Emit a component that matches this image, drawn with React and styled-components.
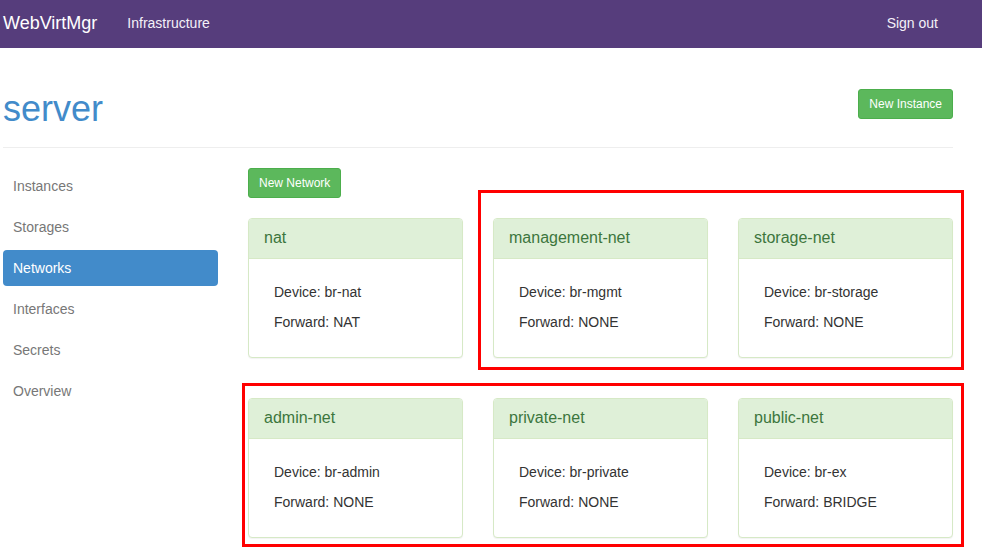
import React from "react";
import styled, { createGlobalStyle } from "styled-components";

const Global = createGlobalStyle`
  html, body { margin: 0; padding: 0; background: #fff; }
  body {
    font-family: "Liberation Sans", Arial, Helvetica, sans-serif;
    font-size: 14px;
    line-height: 20px;
    color: #333;
  }
  * { box-sizing: border-box; }
`;

const Page = styled.div`
  position: relative;
  width: 982px;
  min-height: 558px;
  overflow: hidden;
`;

const Navbar = styled.nav`
  height: 48px;
  background: #563d7c;
  display: flex;
  align-items: center;
  padding: 0 44px 2px 3px;
`;

const Brand = styled.a`
  font-size: 18px;
  color: #fff;
  text-decoration: none;
  margin-right: 30px;
`;

const NavLink = styled.a`
  font-size: 14px;
  color: #f4f1f8;
  text-decoration: none;
  margin-left: ${(p) => (p.$right ? "auto" : "0")};
`;

const Container = styled.div`
  width: 950px;
  margin-left: 3px;
`;

const Header = styled.div`
  height: 100px;
  display: flex;
  justify-content: space-between;
  align-items: flex-start;
  border-bottom: 1px solid #eee;
`;

const Title = styled.h1`
  margin: 41px 0 0;
  font-size: 36px;
  font-weight: 500;
  line-height: 40px;
  color: #428bca;
`;

const Button = styled.button`
  font-family: inherit;
  font-size: 12px;
  line-height: 18px;
  padding: 5px 10px;
  height: 30px;
  color: #fff;
  background: #5cb85c;
  border: 1px solid #4cae4c;
  border-radius: 3px;
  cursor: pointer;
  margin-top: ${(p) => p.$mt || "0"};
`;

const Body = styled.div`
  display: flex;
  margin-top: 20px;
`;

const Sidebar = styled.ul`
  list-style: none;
  margin: 0;
  padding: 0;
  width: 215px;
  display: flex;
  flex-direction: column;
  gap: 5px;
`;

const SideItem = styled.li`
  height: 36px;
  line-height: 36px;
  padding: 0 10px;
  border-radius: 4px;
  color: ${(p) => (p.$active ? "#fff" : "#777")};
  background: ${(p) => (p.$active ? "#428bca" : "transparent")};
`;

const Main = styled.div`
  margin-left: 30px;
  width: 705px;
`;

const Grid = styled.div`
  margin-top: 20px;
  display: grid;
  grid-template-columns: repeat(3, 215px);
  column-gap: 30px;
  row-gap: 40px;
`;

const Card = styled.div`
  border: 1px solid #d6e9c6;
  border-radius: 4px;
  background: #fff;
  box-shadow: 0 1px 1px rgba(0, 0, 0, 0.05);
  overflow: hidden;
`;

const CardHead = styled.div`
  height: 40px;
  line-height: 37px;
  padding: 0 15px;
  background: #dff0d8;
  border-bottom: 1px solid #d6e9c6;
  color: #3c763d;
  font-size: 16px;
`;

const CardBody = styled.div`
  padding: 23px 15px 15px 25px;
`;

const Line = styled.p`
  margin: 0 0 10px;
  line-height: 20px;
`;

const Annotation = styled.div`
  position: absolute;
  border: 3px solid #ff0000;
  pointer-events: none;
`;

const networks = [
  { name: "nat", device: "br-nat", forward: "NAT" },
  { name: "management-net", device: "br-mgmt", forward: "NONE" },
  { name: "storage-net", device: "br-storage", forward: "NONE" },
  { name: "admin-net", device: "br-admin", forward: "NONE" },
  { name: "private-net", device: "br-private", forward: "NONE" },
  { name: "public-net", device: "br-ex", forward: "BRIDGE" },
];

const menu = ["Instances", "Storages", "Networks", "Interfaces", "Secrets", "Overview"];

export default function App() {
  return (
    <Page>
      <Global />
      <Navbar>
        <Brand>WebVirtMgr</Brand>
        <NavLink>Infrastructure</NavLink>
        <NavLink $right>Sign out</NavLink>
      </Navbar>
      <Container>
        <Header>
          <Title>server</Title>
          <Button $mt="41px">New Instance</Button>
        </Header>
        <Body>
          <Sidebar>
            {menu.map((m) => (
              <SideItem key={m} $active={m === "Networks"}>
                {m}
              </SideItem>
            ))}
          </Sidebar>
          <Main>
            <Button>New Network</Button>
            <Grid>
              {networks.map((n) => (
                <Card key={n.name}>
                  <CardHead>{n.name}</CardHead>
                  <CardBody>
                    <Line>Device: {n.device}</Line>
                    <Line>Forward: {n.forward}</Line>
                  </CardBody>
                </Card>
              ))}
            </Grid>
          </Main>
        </Body>
      </Container>
      <Annotation style={{ left: 478, top: 190, width: 486, height: 180 }} />
      <Annotation style={{ left: 242, top: 383, width: 722, height: 164 }} />
    </Page>
  );
}
